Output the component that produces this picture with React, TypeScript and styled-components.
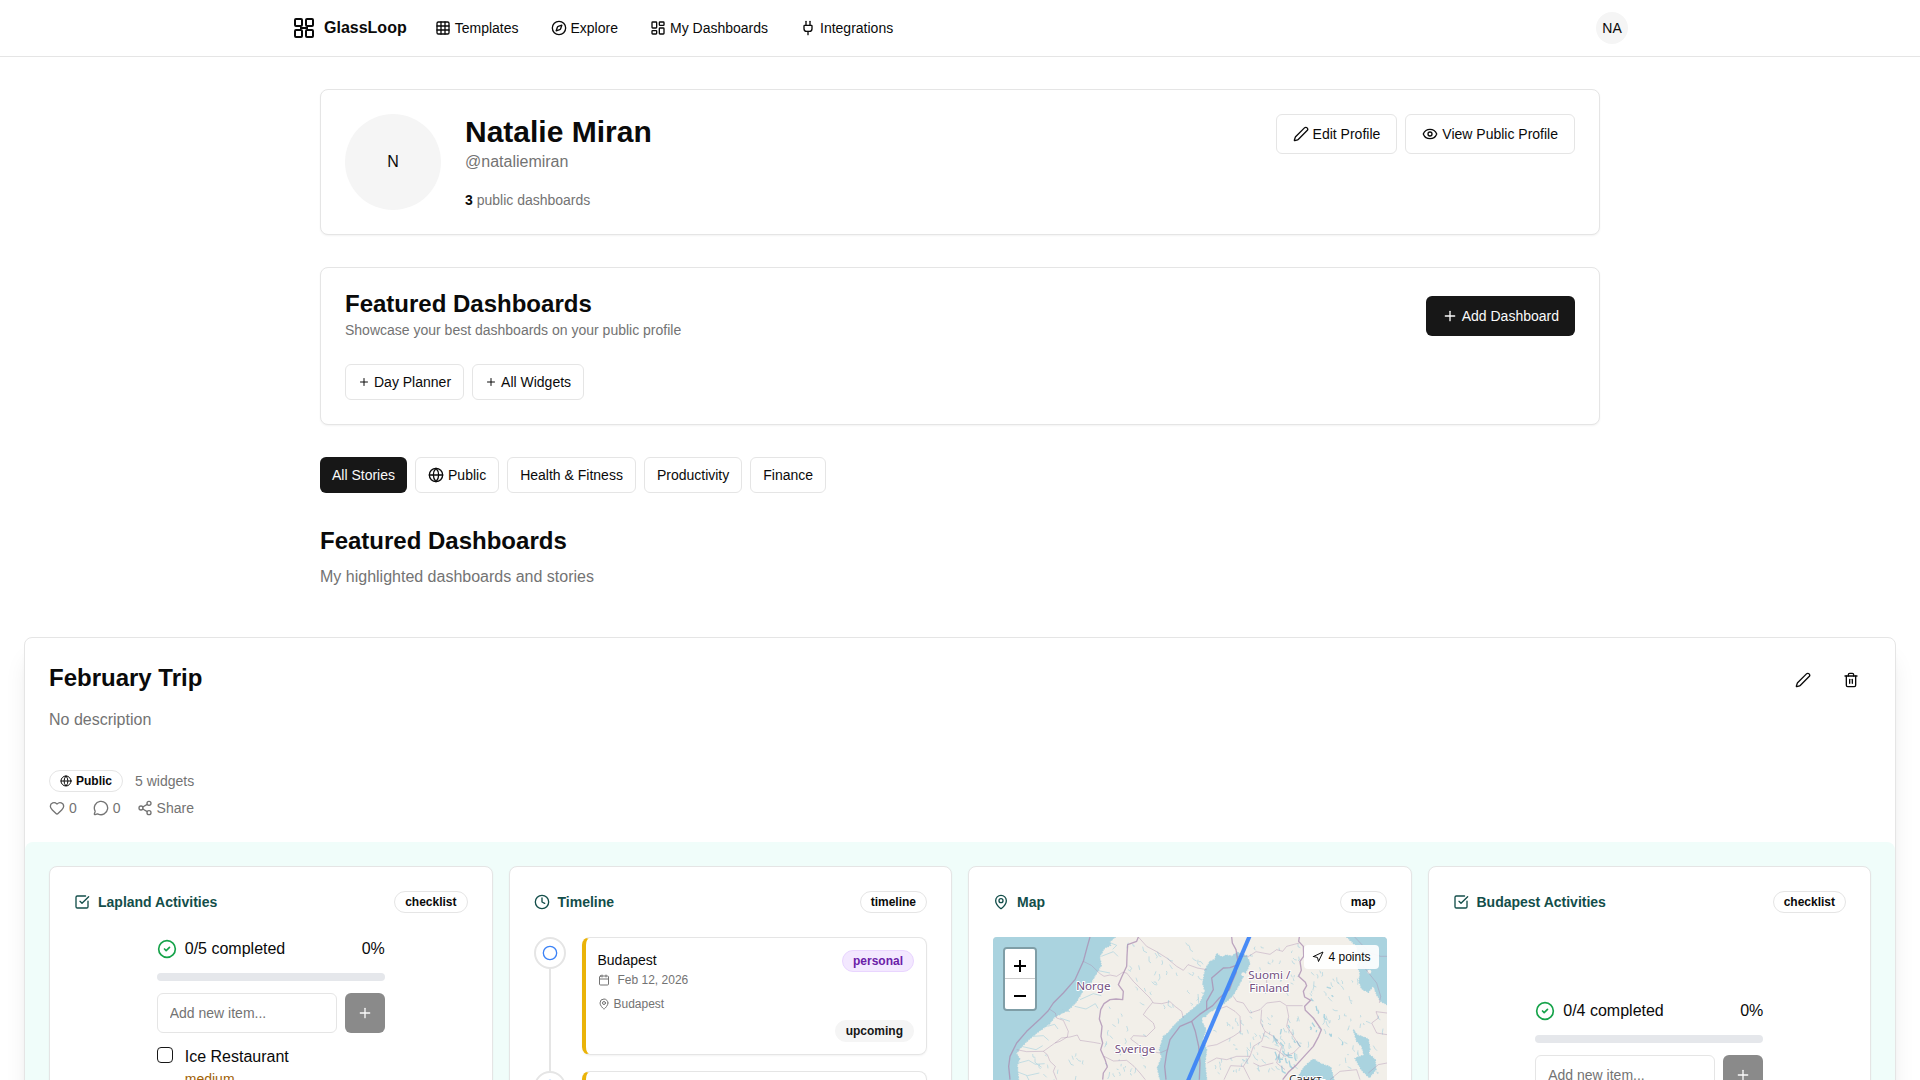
import React from "react";
import styled, { createGlobalStyle } from "styled-components";
import {
  Calendar,
  Circle,
  CircleCheck,
  Clock,
  Compass,
  Eye,
  Globe,
  Grid3x3,
  Heart,
  LayoutDashboard,
  MapPin,
  MessageCircle,
  Navigation,
  Pen,
  Plug,
  Plus,
  Share2,
  SquareCheckBig,
  Trash2,
} from "lucide-react";

const color = {
  ink: "#0a0a0a",
  primary: "#171717",
  muted: "#737373",
  line: "#e5e5e5",
  soft: "#f5f5f5",
  teal: "#134e4a",
};

const GlobalStyle = createGlobalStyle`
  *, *::before, *::after { box-sizing: border-box; }
  html { scrollbar-width: none; }
  body {
    margin: 0;
    background: #fff;
    color: ${color.ink};
    font-family: "Liberation Sans", Arial, Helvetica, sans-serif;
    font-size: 16px;
    line-height: 24px;
  }
  h1, h2, h3, h4, p, ul, ol { margin: 0; padding: 0; }
  ul, ol { list-style: none; }
  a { color: inherit; text-decoration: none; }
  button, input { font: inherit; color: inherit; }
  svg { flex-shrink: 0; }
`;

/* Header */

const Header = styled.header`
  border-bottom: 1px solid ${color.line};
`;

const HeaderInner = styled.div`
  max-width: 1400px;
  height: 56px;
  margin: 0 auto;
  padding: 0 32px;
  display: flex;
  align-items: center;
  justify-content: space-between;
`;

const HeaderLeft = styled.div`
  display: flex;
  align-items: center;
  gap: 28px;
`;

const Brand = styled.a`
  display: flex;
  align-items: center;
  gap: 8px;
  font-weight: 700;
`;

const Nav = styled.nav`
  display: flex;
  align-items: center;
  gap: 32px;
  font-size: 14px;
  line-height: 20px;
`;

const NavLink = styled.a`
  display: flex;
  align-items: center;
  gap: 4px;
`;

const Avatar = styled.div<{ $size: number }>`
  width: ${(p) => p.$size}px;
  height: ${(p) => p.$size}px;
  flex-shrink: 0;
  border-radius: 50%;
  background: ${color.soft};
  display: flex;
  align-items: center;
  justify-content: center;
  font-size: ${(p) => (p.$size > 40 ? 16 : 14)}px;
`;

/* Shared */

const Button = styled.button<{ $primary?: boolean; $small?: boolean }>`
  height: ${(p) => (p.$small ? 36 : 40)}px;
  padding: 0 ${(p) => (p.$small ? 12 : 16)}px;
  display: inline-flex;
  align-items: center;
  gap: 4px;
  border: ${(p) => (p.$primary ? "0" : `1px solid ${color.line}`)};
  border-radius: 6px;
  background: ${(p) => (p.$primary ? color.primary : "#fff")};
  color: ${(p) => (p.$primary ? "#fafafa" : color.ink)};
  font-size: 14px;
  line-height: 20px;
  white-space: nowrap;
`;

const ButtonRow = styled.div`
  display: flex;
  gap: 8px;
`;

const Badge = styled.span<{ $tone?: "purple" | "soft" }>`
  display: inline-flex;
  align-items: center;
  gap: 4px;
  padding: 2px 10px;
  border: 1px solid
    ${(p) => (p.$tone === "purple" ? "#e9d5ff" : p.$tone === "soft" ? color.soft : color.line)};
  border-radius: 11px;
  background: ${(p) => (p.$tone === "purple" ? "#f3e8ff" : p.$tone === "soft" ? color.soft : "transparent")};
  color: ${(p) => (p.$tone === "purple" ? "#6b21a8" : p.$tone === "soft" ? color.primary : color.ink)};
  font-size: 12px;
  line-height: 16px;
  font-weight: 700;
`;

const Card = styled.section`
  padding: 24px;
  border: 1px solid ${color.line};
  border-radius: 8px;
  background: #fff;
  box-shadow: 0 1px 2px rgba(0, 0, 0, 0.05);
`;

const Muted = styled.p<{ $small?: boolean }>`
  color: ${color.muted};
  font-size: ${(p) => (p.$small ? 14 : 16)}px;
  line-height: ${(p) => (p.$small ? 20 : 24)}px;
`;

/* Profile and featured sections */

const Container = styled.main`
  max-width: 1280px;
  margin: 0 auto;
  padding: 32px 0 48px;
  display: flex;
  flex-direction: column;
  gap: 32px;
`;

const ProfileCard = styled(Card)`
  display: flex;
  align-items: flex-start;
  gap: 24px;
`;

const ProfileInfo = styled.div`
  flex: 1;
`;

const ProfileName = styled.h1`
  font-size: 30px;
  line-height: 36px;
`;

const ProfileStats = styled(Muted)`
  margin-top: 16px;

  strong {
    color: ${color.ink};
  }
`;

const FeaturedCard = styled(Card)`
  display: flex;
  flex-direction: column;
  gap: 24px;
`;

const FeaturedTop = styled.div`
  display: flex;
  align-items: center;
  justify-content: space-between;
`;

const FeaturedText = styled.div`
  display: flex;
  flex-direction: column;
  gap: 4px;
`;

const Heading = styled.h2<{ $tight?: boolean }>`
  font-size: 24px;
  line-height: ${(p) => (p.$tight ? 24 : 32)}px;
`;

const Intro = styled.div`
  display: flex;
  flex-direction: column;
  gap: 8px;
`;

/* Dashboard */

const DashboardWrap = styled.div`
  padding: 0 24px;
`;

const DashboardCard = styled.article`
  border: 1px solid ${color.line};
  border-radius: 8px;
  background: #fff;
  box-shadow: 0 20px 25px -5px rgba(0, 0, 0, 0.1), 0 8px 10px -6px rgba(0, 0, 0, 0.1);
`;

const DashboardHead = styled.header`
  padding: 24px;
`;

const DashboardTop = styled.div`
  display: flex;
  align-items: flex-start;
  justify-content: space-between;
  margin-bottom: 10px;
`;

const IconButton = styled.button`
  width: 40px;
  height: 36px;
  padding: 0;
  border: 0;
  border-radius: 6px;
  background: transparent;
  display: flex;
  align-items: center;
  justify-content: center;
`;

const DashboardMeta = styled.div`
  margin-top: 38px;
  display: flex;
  flex-direction: column;
  gap: 6px;
`;

const MetaRow = styled.div<{ $gap: number }>`
  display: flex;
  align-items: center;
  gap: ${(p) => p.$gap}px;
  color: ${color.muted};
  font-size: 14px;
  line-height: 20px;
`;

const MetaButton = styled.button`
  padding: 0;
  border: 0;
  background: transparent;
  display: flex;
  align-items: center;
  gap: 4px;
`;

const WidgetGrid = styled.div`
  padding: 24px;
  border-radius: 8px;
  background: #f0fdfa;
  display: grid;
  grid-template-columns: repeat(4, minmax(0, 1fr));
  gap: 16px;
`;

const WidgetHead = styled.header`
  display: flex;
  align-items: center;
  justify-content: space-between;
  margin-bottom: 24px;
`;

const WidgetTitle = styled.h3`
  display: flex;
  align-items: center;
  gap: 8px;
  color: ${color.teal};
  font-size: 14px;
  line-height: 20px;
`;

/* Checklist */

const ChecklistBody = styled.div<{ $centered?: boolean }>`
  min-height: 220px;
  display: flex;
  align-items: ${(p) => (p.$centered ? "center" : "flex-start")};
  justify-content: center;
`;

const Checklist = styled.div`
  display: flex;
  flex-direction: column;
  gap: 12px;
`;

const ProgressRow = styled.div`
  display: flex;
  align-items: center;
  justify-content: space-between;
`;

const ProgressLabel = styled.span`
  display: flex;
  align-items: center;
  gap: 8px;

  svg {
    color: #16a34a;
  }
`;

const ProgressTrack = styled.div`
  height: 8px;
  border-radius: 4px;
  background: #e5e7eb;
`;

const AddForm = styled.form`
  display: flex;
  gap: 8px;
`;

const AddInput = styled.input`
  width: 180px;
  height: 40px;
  padding: 0 12px;
  border: 1px solid ${color.line};
  border-radius: 6px;
  background: #fff;
  font-size: 14px;

  &::placeholder {
    color: ${color.muted};
    opacity: 1;
  }
`;

const AddButton = styled.button`
  width: 40px;
  height: 40px;
  padding: 0;
  border: 0;
  border-radius: 6px;
  background: ${color.primary};
  color: #fafafa;
  opacity: 0.5;
  display: flex;
  align-items: center;
  justify-content: center;
`;

const Item = styled.label`
  display: flex;
  align-items: flex-start;
  gap: 12px;
`;

const Checkbox = styled.input`
  appearance: none;
  width: 16px;
  height: 16px;
  margin: 2px 0 0;
  border: 1px solid ${color.primary};
  border-radius: 4px;
`;

const ItemText = styled.span`
  display: flex;
  flex-direction: column;
`;

const Priority = styled.small`
  color: #a16207;
  font-size: 14px;
  line-height: 20px;
`;

/* Timeline */

const Event = styled.li`
  display: flex;
  align-items: stretch;
  gap: 16px;
`;

const Rail = styled.div`
  width: 32px;
  display: flex;
  flex-direction: column;
  align-items: center;
`;

const Marker = styled.span`
  width: 32px;
  height: 32px;
  border: 2px solid ${color.line};
  border-radius: 50%;
  background: #fff;
  color: #3b82f6;
  display: flex;
  align-items: center;
  justify-content: center;
`;

const RailLine = styled.span`
  width: 2px;
  flex: 1;
  background: ${color.line};
`;

const EventCard = styled.div`
  flex: 1;
  min-height: 118px;
  margin-bottom: 16px;
  padding: 12px;
  border: 1px solid ${color.line};
  border-left: 4px solid #eab308;
  border-radius: 8px;
  box-shadow: 0 1px 2px rgba(0, 0, 0, 0.05);
  display: flex;
  flex-direction: column;
`;

const EventTop = styled.div`
  display: flex;
  align-items: flex-start;
  justify-content: space-between;
`;

const EventTitle = styled.h4`
  font-size: 14px;
  line-height: 20px;
  font-weight: 400;
`;

const EventLine = styled.p<{ $gap: number }>`
  display: flex;
  align-items: center;
  gap: ${(p) => p.$gap}px;
  margin-bottom: 8px;
  color: ${color.muted};
  font-size: 12px;
  line-height: 16px;
`;

const EventStatus = styled.div`
  display: flex;
  justify-content: flex-end;
`;

/* Map */

const MapFrame = styled.div`
  position: relative;
  height: 220px;
  border-radius: 4px;
  overflow: hidden;

  > svg {
    display: block;
    width: 100%;
    height: 100%;
  }
`;

const ZoomControl = styled.div`
  position: absolute;
  top: 10px;
  left: 10px;
  border: 2px solid rgba(0, 0, 0, 0.25);
  border-radius: 4px;
  background-clip: padding-box;
`;

const ZoomButton = styled.button`
  width: 30px;
  height: 30px;
  padding: 4px 0 0;
  border: 0;
  background: #fff;
  display: flex;
  align-items: center;
  justify-content: center;
  color: #000;

  &:first-child {
    border-bottom: 1px solid #ccc;
    border-radius: 2px 2px 0 0;
  }

  &:last-child {
    border-radius: 0 0 2px 2px;
  }
`;

const PointsChip = styled.div`
  position: absolute;
  top: 8px;
  right: 8px;
  padding: 4px 8px;
  border-radius: 4px;
  background: rgba(255, 255, 255, 0.9);
  display: flex;
  align-items: center;
  gap: 4px;
  font-size: 12px;
  line-height: 16px;
`;

const MapLabel = styled.text<{ $city?: boolean }>`
  font-family: "Noto Sans", sans-serif;
  font-size: 35px;
  text-anchor: middle;
  fill: ${(p) => (p.$city ? "#333" : "#74507f")};
  stroke: #fff;
  stroke-width: 6px;
  stroke-linejoin: round;
  paint-order: stroke;
`;

function Logo() {
  return (
    <svg width="24" height="24" viewBox="0 0 24 24" fill="none" stroke="currentColor" strokeWidth="2" aria-hidden="true">
      <rect x="3" y="3" width="7" height="7" rx="1" />
      <rect x="14" y="3" width="7" height="7" rx="1" />
      <rect x="3" y="14" width="7" height="7" rx="1" />
      <rect x="14" y="14" width="7" height="7" rx="1" />
      <path d="M8 12h8" />
    </svg>
  );
}

function seeded(seed: number) {
  let s = seed;
  return () => {
    s = (s * 16807) % 2147483647;
    return s / 2147483647;
  };
}

/* Short irregular strokes that stand for the small lakes of one region. */
function lakes(seed: number, count: number, x: number, y: number, w: number, h: number, size: number) {
  const rnd = seeded(seed);
  let d = "";
  for (let i = 0; i < count; i++) {
    const px = x + rnd() * w;
    const py = y + rnd() * h;
    const a = rnd() * size * 0.7 - size / 5;
    const b = rnd() * size;
    const c = rnd() * size - size / 3;
    const e = rnd() * size * 0.6;
    d += `M${px.toFixed(0)} ${py.toFixed(0)}l${a.toFixed(0)} ${b.toFixed(0)}l${c.toFixed(0)} ${e.toFixed(0)}`;
  }
  return d;
}

const water = [
  "M99 262H466L449 276L452 287L433 296L419 322L424 347L409 372L394 397L374 412L364 432L349 457L324 482L284 502L269 522L234 547L204 572L179 597L169 612L179 627L172 647L176 691L160 922H99Z",
  "M770 312L785 322L800 316L815 320L832 308L860 318L870 340L862 360L850 380L835 410L818 438L800 455L780 470L745 490L725 515L738 540L728 570L740 600L735 640L740 690L720 922H560L600 690L592 655L605 622L598 600L610 560L624 550L640 530L665 505L690 485L720 460L735 425L728 400L735 360L750 335L764 330Z",
  "M1160 262H1281V465L1262 455L1250 435L1240 408L1225 428L1205 418L1197 395L1200 370L1192 348L1198 330L1190 290Z",
  "M1010 690L1030 655L1045 640L1060 628L1085 643L1112 652L1122 690L1115 750H1020Z",
  "M1180 540L1192 556L1205 560L1225 568L1230 598L1226 612L1246 630L1248 660L1228 684L1205 662L1185 626L1212 616L1205 590L1190 575Z",
];

const majorBorders = [
  "M390 262L382 290L370 335L345 390L310 430L280 460L264 484L240 508L200 545L170 580L150 620L146 650L150 690",
  "M535 262L530 275L503 285L501 320L500 350L486 380L475 405L490 425L488 450L468 448L450 450L432 462L422 480L418 508L426 530L423 560L428 580L422 600L436 632L442 652L430 670L428 690",
  "M815 262L817 280L828 300L833 330L828 370L816 398",
  "M835 345L810 354L790 355L770 372L755 385L760 420L740 455L740 480L718 495L695 515L660 530L630 570L620 610L614 650L618 690",
  "M816 398L808 420L778 445L758 468L740 480",
  "M695 515L706 545L716 590L720 640L718 690",
  "M1018 262L1016 275L1030 290L1031 320L1020 335L1024 362L1016 380L1036 398L1040 408L1030 425L1034 442L1052 452L1034 470L1036 482L1060 505L1084 540L1076 560L1060 590L1040 612L1010 645L985 668L968 690",
];

const minorBorders = [
  "M370 335L394 347L420 372L432 380L450 376L470 380L488 368L500 370",
  "M535 262L560 290L590 306L620 325L650 350L670 362L684 345L712 355L740 360",
  "M500 370L520 395L545 420L570 445L580 460L605 462L630 456L645 470L665 485L670 505",
  "M578 458L560 480L550 495L580 520L585 535L560 560L520 558L512 568L535 585L540 605L566 604L600 610L622 600",
  "M268 478L286 490L290 505L310 512L325 545L322 562L300 575L285 580L250 605L200 606L170 600",
  "M250 605L262 615L270 635L286 650L280 665L290 690",
  "M285 580L304 565L330 562L352 556L360 572L400 578L422 582",
  "M432 620L460 634L500 632L522 650L540 670L556 690",
  "M833 320L866 320L888 306L930 314L950 300L968 305L980 290L1018 280",
  "M820 440L830 455L850 460L870 490L900 480L920 460L960 455L980 468L1028 468",
  "M770 480L800 470L825 485L840 500L842 545L820 560L770 585L742 590",
  "M905 480L902 520L915 545L905 575L880 590L870 620L850 650L812 648L792 690",
  "M980 470L986 500L980 530L1000 560L1020 590L1000 610L975 620L950 600L905 590",
  "M915 545L940 560L965 590L950 640L975 660",
  "M742 640L770 625L800 630L830 620L870 620",
  "M850 650L870 690M940 640L900 650L880 640",
  "M1281 555L1250 550L1235 520L1255 505L1248 486L1281 490",
  "M1110 690L1140 665L1190 660L1200 690M1225 670L1255 645L1281 640",
  "M920 430V380M1184 262L1230 310L1262 320H1281M1210 350L1250 400L1262 440L1258 460",
];

const coastInlets =
  "M440 275l30 12l-12 12M424 320l36 -14l14 14M410 362l40 8M360 450l40 -18l24 6M344 470l34 8l28 -16l8 14M300 505l30 10M262 530l22 -6l10 14M220 560l30 -2l16 14M184 590l44 10l20 -12M176 640l30 -8l20 12l28 -2M176 668l26 10l36 -8M290 496l18 -14l22 4";

function NordicMap() {
  return (
    <svg viewBox="99 262 1182 660" preserveAspectRatio="xMinYMin slice" role="img" aria-label="Map">
      <rect x="99" y="262" width="1182" height="660" fill="#f2efe9" />
      <g fill="#aad3df" stroke="#aad3df" strokeLinejoin="round">
        {water.map((d) => (
          <path key={d} d={d} strokeWidth="4" strokeDasharray="5 3 2 4" />
        ))}
        <g fill="none" strokeWidth="2">
          <path d={coastInlets} />
          <path d={lakes(11, 40, 505, 275, 220, 190, 16)} />
          <path d={lakes(29, 28, 435, 470, 120, 210, 14)} />
          <path d={lakes(37, 16, 200, 600, 200, 90, 14)} />
          <path d={lakes(53, 60, 840, 480, 180, 180, 14)} />
          <path d={lakes(71, 18, 940, 510, 70, 140, 18)} strokeWidth="4" />
          <path d={lakes(97, 26, 870, 280, 150, 150, 12)} />
          <path d={lakes(113, 36, 1045, 360, 150, 250, 14)} />
          <path d={lakes(131, 18, 760, 500, 80, 180, 10)} />
          <path d={lakes(151, 16, 1140, 480, 130, 190, 12)} />
          <path d={lakes(173, 12, 1050, 380, 130, 200, 12)} strokeWidth="4" />
        </g>
      </g>
      <g fill="#f2efe9">
        <circle cx="850" cy="374" r="6" />
        <circle cx="732" cy="508" r="6" />
        <circle cx="1228" cy="366" r="6" />
      </g>
      <g fill="none" stroke="#a98bb0" strokeLinejoin="round">
        {majorBorders.map((d) => (
          <path key={d} d={d} strokeWidth="4" opacity="0.75" />
        ))}
        {minorBorders.map((d) => (
          <path key={d} d={d} strokeWidth="2.4" opacity="0.5" />
        ))}
      </g>
      <MapLabel x="400" y="422">Norge</MapLabel>
      <MapLabel x="525" y="610">Sverige</MapLabel>
      <MapLabel x="928" y="387">Suomi /</MapLabel>
      <MapLabel x="928" y="426">Finland</MapLabel>
      <MapLabel x="1041" y="699" $city>Санкт-</MapLabel>
      <path d="M880 233L630 820" stroke="#3b82f6" strokeWidth="12" opacity="0.92" fill="none" />
    </svg>
  );
}

type WidgetProps = { title: string; kind: string; icon: React.ReactNode; children: React.ReactNode };

function Widget({ title, kind, icon, children }: WidgetProps) {
  return (
    <Card>
      <WidgetHead>
        <WidgetTitle>
          {icon}
          {title}
        </WidgetTitle>
        <Badge>{kind}</Badge>
      </WidgetHead>
      {children}
    </Card>
  );
}

type ChecklistProps = { total: number; centered?: boolean; items?: { name: string; priority: string }[] };

function ChecklistContent({ total, centered, items = [] }: ChecklistProps) {
  return (
    <ChecklistBody $centered={centered}>
      <Checklist>
        <ProgressRow>
          <ProgressLabel>
            <CircleCheck size={20} />
            0/{total} completed
          </ProgressLabel>
          <span>0%</span>
        </ProgressRow>
        <ProgressTrack />
        <AddForm>
          <AddInput type="text" placeholder="Add new item..." aria-label="Add new item" />
          <AddButton type="button" disabled aria-label="Add">
            <Plus size={16} />
          </AddButton>
        </AddForm>
        {items.map((item) => (
          <Item key={item.name}>
            <Checkbox type="checkbox" />
            <ItemText>
              {item.name}
              <Priority>{item.priority}</Priority>
            </ItemText>
          </Item>
        ))}
      </Checklist>
    </ChecklistBody>
  );
}

export default function App() {
  return (
    <>
      <GlobalStyle />
      <Header>
        <HeaderInner>
          <HeaderLeft>
            <Brand href="#">
              <Logo />
              GlassLoop
            </Brand>
            <Nav>
              <NavLink href="#"><Grid3x3 size={16} />Templates</NavLink>
              <NavLink href="#"><Compass size={16} />Explore</NavLink>
              <NavLink href="#"><LayoutDashboard size={16} />My Dashboards</NavLink>
              <NavLink href="#"><Plug size={16} />Integrations</NavLink>
            </Nav>
          </HeaderLeft>
          <Avatar $size={32}>NA</Avatar>
        </HeaderInner>
      </Header>

      <Container>
        <ProfileCard>
          <Avatar $size={96}>N</Avatar>
          <ProfileInfo>
            <ProfileName>Natalie Miran</ProfileName>
            <Muted>@nataliemiran</Muted>
            <ProfileStats $small>
              <strong>3</strong> public dashboards
            </ProfileStats>
          </ProfileInfo>
          <ButtonRow>
            <Button type="button"><Pen size={16} />Edit Profile</Button>
            <Button type="button"><Eye size={16} />View Public Profile</Button>
          </ButtonRow>
        </ProfileCard>

        <FeaturedCard>
          <FeaturedTop>
            <FeaturedText>
              <Heading $tight>Featured Dashboards</Heading>
              <Muted $small>Showcase your best dashboards on your public profile</Muted>
            </FeaturedText>
            <Button type="button" $primary><Plus size={16} />Add Dashboard</Button>
          </FeaturedTop>
          <ButtonRow>
            <Button type="button" $small><Plus size={12} />Day Planner</Button>
            <Button type="button" $small><Plus size={12} />All Widgets</Button>
          </ButtonRow>
        </FeaturedCard>

        <ButtonRow>
          <Button type="button" $small $primary>All Stories</Button>
          <Button type="button" $small><Globe size={16} />Public</Button>
          <Button type="button" $small>Health &amp; Fitness</Button>
          <Button type="button" $small>Productivity</Button>
          <Button type="button" $small>Finance</Button>
        </ButtonRow>

        <Intro>
          <Heading>Featured Dashboards</Heading>
          <Muted>My highlighted dashboards and stories</Muted>
        </Intro>
      </Container>

      <DashboardWrap>
        <DashboardCard>
          <DashboardHead>
            <DashboardTop>
              <Heading>February Trip</Heading>
              <ButtonRow>
                <IconButton type="button" aria-label="Edit"><Pen size={16} /></IconButton>
                <IconButton type="button" aria-label="Delete"><Trash2 size={16} /></IconButton>
              </ButtonRow>
            </DashboardTop>
            <Muted>No description</Muted>
            <DashboardMeta>
              <MetaRow $gap={12}>
                <Badge><Globe size={12} />Public</Badge>
                5 widgets
              </MetaRow>
              <MetaRow $gap={16}>
                <MetaButton type="button"><Heart size={16} />0</MetaButton>
                <MetaButton type="button"><MessageCircle size={16} />0</MetaButton>
                <MetaButton type="button"><Share2 size={16} />Share</MetaButton>
              </MetaRow>
            </DashboardMeta>
          </DashboardHead>

          <WidgetGrid>
            <Widget title="Lapland Activities" kind="checklist" icon={<SquareCheckBig size={16} />}>
              <ChecklistContent total={5} items={[{ name: "Ice Restaurant", priority: "medium" }]} />
            </Widget>

            <Widget title="Timeline" kind="timeline" icon={<Clock size={16} />}>
              <ol>
                <Event>
                  <Rail>
                    <Marker><Circle size={16} /></Marker>
                    <RailLine />
                  </Rail>
                  <EventCard>
                    <EventTop>
                      <EventTitle>Budapest</EventTitle>
                      <Badge $tone="purple">personal</Badge>
                    </EventTop>
                    <EventLine $gap={8}><Calendar size={12} />Feb 12, 2026</EventLine>
                    <EventLine $gap={4}><MapPin size={12} />Budapest</EventLine>
                    <EventStatus>
                      <Badge $tone="soft">upcoming</Badge>
                    </EventStatus>
                  </EventCard>
                </Event>
                <Event>
                  <Rail>
                    <Marker><Circle size={16} /></Marker>
                  </Rail>
                  <EventCard />
                </Event>
              </ol>
            </Widget>

            <Widget title="Map" kind="map" icon={<MapPin size={16} />}>
              <MapFrame>
                <NordicMap />
                <ZoomControl>
                  <ZoomButton type="button" aria-label="Zoom in">
                    <svg width="14" height="14" viewBox="0 0 14 14" stroke="currentColor" strokeWidth="2">
                      <path d="M7 1v12M1 7h12" />
                    </svg>
                  </ZoomButton>
                  <ZoomButton type="button" aria-label="Zoom out">
                    <svg width="14" height="14" viewBox="0 0 14 14" stroke="currentColor" strokeWidth="2">
                      <path d="M1 7h12" />
                    </svg>
                  </ZoomButton>
                </ZoomControl>
                <PointsChip><Navigation size={12} />4 points</PointsChip>
              </MapFrame>
            </Widget>

            <Widget title="Budapest Activities" kind="checklist" icon={<SquareCheckBig size={16} />}>
              <ChecklistContent total={4} centered />
            </Widget>
          </WidgetGrid>
        </DashboardCard>
      </DashboardWrap>
    </>
  );
}
